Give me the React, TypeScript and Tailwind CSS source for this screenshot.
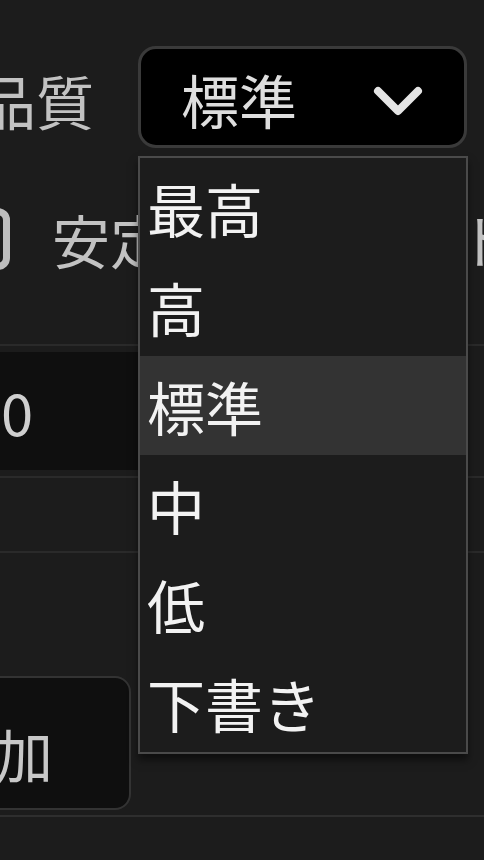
import React from "react";

const options = ["最高", "高", "標準", "中", "低", "下書き"];

export default function App() {
  const selected = "標準";

  return (
    <div
      className="relative h-[860px] w-[484px] overflow-hidden bg-[#1c1c1c] text-[58px] leading-none"
      style={{ fontFamily: '"Noto Sans CJK JP", "Noto Sans", sans-serif' }}
    >
      {/* quality row */}
      <div className="mt-[46px] flex h-[102px] items-center">
        <div className="flex w-[138px] shrink-0 justify-end pr-[44px] pt-[6px] text-[#c2c2c2]">
          <span className="shrink-0 whitespace-nowrap">品質</span>
        </div>
        <div className="flex h-[102px] w-[329px] shrink-0 items-center rounded-[18px] border-[3px] border-[#3a3a3a] bg-black pl-[40px] pr-[40px] pt-[4px] text-[#dedede]">
          <span>{selected}</span>
          <svg className="ml-auto mt-[6px]" width="52" height="36" viewBox="0 0 52 36" fill="none">
            <path d="M6 7 L26 27 L46 7" stroke="#e4e4e4" strokeWidth="8" strokeLinecap="round" strokeLinejoin="round" />
          </svg>
        </div>
      </div>

      {/* stability row */}
      <div className="mt-[60px] flex h-[62px] items-center">
        <div className="-ml-[52px] h-[62px] w-[62px] shrink-0 rounded-[12px] border-[7px] border-[#bdbdbd]" />
        <span className="ml-[42px] whitespace-nowrap text-[#c2c2c2]">安定ビットレート</span>
      </div>

      <div className="mt-[74px] h-[2px] bg-[#2a2a2a]" />
      <div className="mt-[6px] flex h-[118px] w-[320px] items-center bg-[#0f0f0f] text-[58px] text-[#cfcfcf]">
        <span className="ml-[1px]">0</span>
      </div>
      <div className="mt-[6px] h-[2px] bg-[#2a2a2a]" />
      <div className="mt-[73px] h-[2px] bg-[#2a2a2a]" />

      <div className="-ml-[60px] mt-[123px] flex h-[134px] w-[191px] items-center justify-end rounded-[16px] border-2 border-[#333] bg-[#0f0f0f] pr-[76px] pt-[20px] text-[#c8c8c8]">
        <span className="whitespace-nowrap">追加</span>
      </div>
      <div className="mt-[5px] h-[2px] bg-[#2e2e2e]" />

      {/* open dropdown list */}
      <div className="absolute left-[138px] top-[156px] w-[330px] border-2 border-[#4a4a4a] bg-[#1c1c1c] shadow-[0_6px_8px_rgba(0,0,0,0.5)]">
        {options.map((opt) => (
          <div
            key={opt}
            className={`flex h-[99px] items-center pl-[7px] text-[#f2f2f2] ${opt === selected ? "bg-[#333333]" : ""}`}
          >
            {opt}
          </div>
        ))}
      </div>
    </div>
  );
}
